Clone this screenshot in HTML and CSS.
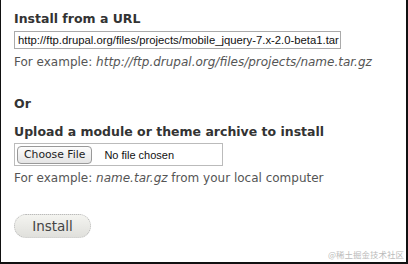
FILE: index.html
```html
<!DOCTYPE html>
<html>
<head>
<meta charset="utf-8">
<link rel="stylesheet" href="styles.css">
</head>
<body>
<div class="frame">
  <div class="content">
    <div class="item item-url">
      <div class="label">Install from a URL</div>
      <div class="textfield">http://ftp.drupal.org/files/projects/mobile_jquery-7.x-2.0-beta1.tar</div>
      <div class="desc">For example: <em>http://ftp.drupal.org/files/projects/name.tar.gz</em></div>
    </div>
    <div class="or">Or</div>
    <div class="item item-upload">
      <div class="label">Upload a module or theme archive to install</div>
      <div class="filefield"><span class="choose">Choose File</span><span class="nofile">No file chosen</span></div>
      <div class="desc">For example: <em>name.tar.gz</em> from your local computer</div>
    </div>
    <div class="actions"><span class="btn">Install</span></div>
  </div>
  <div class="watermark">@稀土掘金技术社区</div>
</div>
</body>
</html>
```
FILE: styles.css
```css
html, body {
  margin: 0;
  padding: 0;
  background: #fff;
}
.frame {
  width: 408px;
  height: 264px;
  box-sizing: border-box;
  border-left: 1px solid #111;
  border-right: 2px solid #111;
  border-bottom: 2px solid #111;
  display: flex;
  flex-direction: column;
  justify-content: space-between;
  font-family: "DejaVu Sans", "Liberation Sans", sans-serif;
  color: #333;
}
.content {
  padding: 11px 0 0 13px;
  display: flex;
  flex-direction: column;
}
.label {
  font-weight: bold;
  font-size: 12.5px;
  line-height: 16px;
  color: #333;
  margin-bottom: 4px;
}
.item-upload .label {
  margin-bottom: 3px;
}
.textfield {
  width: 327px;
  height: 18px;
  box-sizing: border-box;
  border: 1px solid #aaa;
  font-family: "Liberation Sans", Arial, sans-serif;
  font-size: 11.3px;
  line-height: 16px;
  color: #111;
  padding: 0 3px;
  white-space: nowrap;
  overflow: hidden;
}
.desc {
  font-size: 12px;
  line-height: 15px;
  color: #555;
  margin-top: 6px;
}
.item-upload .desc {
  margin-top: 5px;
}
.desc em {
  font-style: italic;
}
.or {
  font-weight: bold;
  font-size: 12.5px;
  line-height: 16px;
  margin-top: 26px;
  margin-bottom: 12px;
}
.filefield {
  width: 209px;
  height: 23px;
  box-sizing: border-box;
  border: 1px solid #bbb;
  display: flex;
  align-items: center;
  padding-left: 2px;
  gap: 12px;
}
.choose {
  height: 18px;
  box-sizing: border-box;
  border: 1px solid #999;
  border-radius: 4px;
  background: linear-gradient(#fdfdfd, #e4e4e4);
  font-size: 10.8px;
  line-height: 16px;
  padding: 0 6px;
  color: #222;
}
.nofile {
  font-family: "Liberation Sans", Arial, sans-serif;
  font-size: 11px;
  color: #111;
}
.actions {
  margin-top: 28px;
}
.btn {
  display: inline-block;
  width: 77px;
  height: 24px;
  box-sizing: border-box;
  border: 1px dotted #bbb;
  border-radius: 12px;
  background: linear-gradient(#f4f4f0, #e0e0dc);
  text-align: center;
  font-size: 13.5px;
  line-height: 22px;
  color: #444;
}
.watermark {
  align-self: flex-end;
  font-family: "Noto Sans CJK SC", sans-serif;
  font-size: 8.5px;
  line-height: 10px;
  color: #bbb;
  margin: 0 2px 3px 0;
}
```
